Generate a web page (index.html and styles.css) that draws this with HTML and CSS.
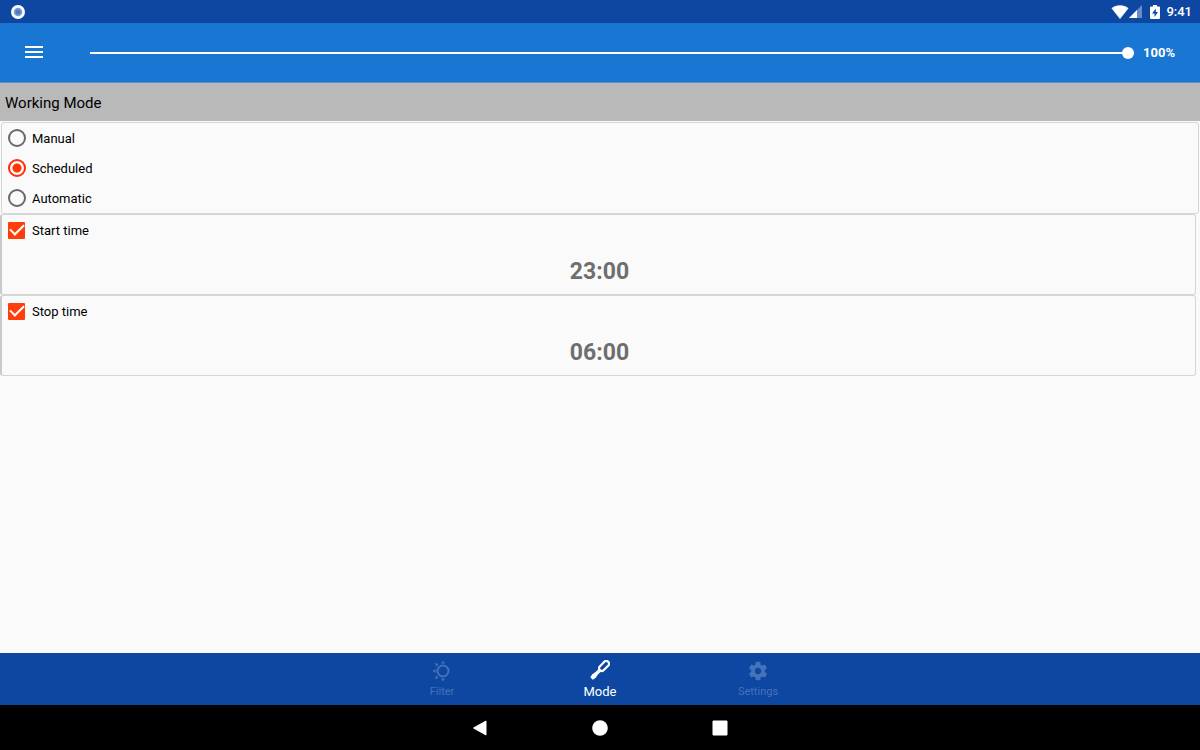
FILE: index.html
```html
<!DOCTYPE html>
<html lang="en">
<head>
    <meta charset="UTF-8">
    <meta name="viewport" content="width=device-width, initial-scale=1.0">
    <title>Working Mode</title>
    <link rel="stylesheet" href="styles.css">
</head>
<body>
    <!-- Status bar -->
    <div class="status-bar">
        <svg class="status-dot" width="14" height="14" viewBox="0 0 14 14" aria-hidden="true">
            <circle cx="7" cy="7" r="7" fill="#fff"/>
            <circle cx="7" cy="7" r="4.300" fill="#7a9bd3"/>
            <circle cx="7" cy="7" r="2.500" fill="#4f7ac2"/>
        </svg>
        <div class="status-icons">
            <svg width="18" height="14" viewBox="0 0 18 14" aria-hidden="true">
                <path d="M9 14 0.5 3.3C5 -0.7 13 -0.7 17.500 3.300Z" fill="#fff"/>
            </svg>
            <svg class="signal" width="13" height="13" viewBox="0 0 13 13" aria-hidden="true">
                <path d="M0 13 13 0V13Z" fill="#6a8bc8"/>
                <path d="M0 13 8 5V13Z" fill="#fff"/>
            </svg>
            <svg class="battery" width="10" height="14" viewBox="0 0 10 14" aria-hidden="true">
                <path d="M3 0H7V1.500H9Q10 1.500 10 2.500V13Q10 14 9 14H1Q0 14 0 13V2.500Q0 1.500 1 1.500H3Z" fill="#fff"/>
                <path d="M5.800 3.500 2 8.500H4.500V12L8 7H5.800Z" fill="#0d47a1"/>
            </svg>
            <span class="clock">9:41</span>
        </div>
    </div>

    <!-- App bar with the intensity slider -->
    <header class="app-bar">
        <button class="menu-btn" type="button" aria-label="Menu">
            <svg width="18" height="14" viewBox="0 0 18 14">
                <path d="M0 1H18M0 6H18M0 11H18" stroke="#fff" stroke-width="2"/>
            </svg>
        </button>
        <input class="slider" id="level" type="range" min="0" max="100" value="100" aria-label="Level">
        <output class="level" for="level">100%</output>
    </header>

    <main class="content">
        <h1 class="section-title">Working Mode</h1>

        <div class="card modes" role="radiogroup" aria-label="Working Mode">
            <label class="option"><input type="radio" name="mode" value="manual">Manual</label>
            <label class="option"><input type="radio" name="mode" value="scheduled" checked>Scheduled</label>
            <label class="option"><input type="radio" name="mode" value="automatic">Automatic</label>
        </div>

        <div class="card timer">
            <label class="option"><input type="checkbox" name="start" checked>Start time</label>
            <button class="time" type="button">23:00</button>
        </div>

        <div class="card timer">
            <label class="option"><input type="checkbox" name="stop" checked>Stop time</label>
            <button class="time" type="button">06:00</button>
        </div>
    </main>

    <!-- Bottom tabs -->
    <nav class="tabs">
        <a class="tab" href="#filter">
            <svg width="20" height="22" viewBox="0 0 20 22" fill="currentColor">
                <circle cx="11" cy="11" r="5.500" fill="none" stroke="currentColor" stroke-width="2"/>
                <path d="M11 0.500 13 3.500H9ZM11 21.500 9 18.500H13ZM0.500 11 3.500 9V13ZM3 3 6.800 4 4 6.800ZM3 19 4 15.200 6.800 18Z"/>
            </svg>
            <span>Filter</span>
        </a>
        <a class="tab active" href="#mode">
            <svg width="20" height="20" viewBox="0 0 20 20" fill="none" stroke="currentColor">
                <g transform="rotate(45 10 10)">
                    <rect x="7.300" y="-1.500" width="5.400" height="11.500" rx="2.300" stroke-width="2.200"/>
                    <path d="M10 10V16" stroke-width="3.400"/>
                    <path d="M8.300 15H11.700L12.500 18.500 11.700 22H8.300L7.500 18.500Z" fill="currentColor" stroke="none"/>
                </g>
            </svg>
            <span>Mode</span>
        </a>
        <a class="tab" href="#settings">
            <svg width="22" height="22" viewBox="0 0 24 24" fill="currentColor">
                <path d="M19.430 12.980c.04-.32.07-.64.07-.98s-.03-.66-.07-.98l2.110-1.650c.19-.15.24-.42.12-.64l-2-3.460c-.12-.22-.39-.3-.61-.22l-2.490 1c-.52-.4-1.080-.73-1.690-.98l-.38-2.650C14.460 2.180 14.250 2 14 2h-4c-.25 0-.46.18-.49.42l-.38 2.650c-.61.25-1.170.59-1.690.98l-2.490-1c-.23-.09-.49 0-.61.22l-2 3.460c-.13.22-.07.49.12.64l2.110 1.650c-.04.32-.07.65-.07.98s.03.66.07.98l-2.110 1.650c-.19.15-.24.42-.12.64l2 3.460c.12.22.39.3.61.22l2.490-1c.52.4 1.080.73 1.690.98l.38 2.650c.03.24.24.42.49.42h4c.25 0 .46-.18.49-.42l.38-2.650c.61-.25 1.170-.59 1.690-.98l2.490 1c.23.09.49 0 .61-.22l2-3.460c.12-.22.07-.49-.12-.64l-2.110-1.650zM12 15.500c-1.930 0-3.500-1.570-3.500-3.500s1.570-3.500 3.500-3.500 3.500 1.570 3.500 3.500-1.570 3.500-3.500 3.500z"/>
            </svg>
            <span>Settings</span>
        </a>
    </nav>

    <!-- System navigation -->
    <div class="system-nav">
        <button type="button" aria-label="Back">
            <svg width="16" height="16" viewBox="0 0 16 16"><path d="M1.500 8 14 1V15Z" fill="#fff" stroke="#fff" stroke-linejoin="round"/></svg>
        </button>
        <button type="button" aria-label="Home">
            <svg width="16" height="16" viewBox="0 0 16 16"><circle cx="8" cy="8" r="7.800" fill="#fff"/></svg>
        </button>
        <button type="button" aria-label="Recent apps">
            <svg width="16" height="16" viewBox="0 0 16 16"><rect x="0.500" y="0.500" width="15" height="15" rx="1" fill="#fff"/></svg>
        </button>
    </div>

    <script>
        // Keep the percentage in step with the slider
        const slider = document.getElementById('level');
        slider.addEventListener('input', () => {
            document.querySelector('.level').textContent = slider.value + '%';
        });
    </script>
</body>
</html>
```
FILE: styles.css
```css
/* Global Styles */
* {
    box-sizing: border-box;
}

body {
    font-family: Roboto, 'Liberation Sans', sans-serif;
    margin: 0;
    background-color: #fafafa;
    color: #000;
    display: flex;
    flex-direction: column;
    min-height: 100vh;
}

button {
    font-family: inherit;
    background: none;
    border: none;
    padding: 0;
    cursor: pointer;
}

svg {
    display: block;
}

/* Status bar */
.status-bar {
    display: flex;
    align-items: center;
    justify-content: space-between;
    height: 23px;
    padding: 0 8px 0 11px;
    background-color: #0d47a1;
    color: #fff;
}

.status-icons {
    display: flex;
    align-items: center;
}

.battery {
    margin: 0 6px 0 8px;
}

.clock {
    font-size: 13px;
    font-weight: 500;
    line-height: 23px;
}

/* App bar */
.app-bar {
    display: flex;
    align-items: center;
    height: 60px;
    padding: 0 25px;
    background-color: #1976d2;
    border-bottom: 1px solid #5f8fc4;
    color: #fff;
}

.menu-btn {
    margin-right: 47px;
}

.slider {
    flex: 1;
    min-width: 0;
    height: 20px;
    margin: 0 9px 0 0;
    appearance: none;
    background: linear-gradient(#fff, #fff) center / 100% 2px no-repeat;
    cursor: pointer;
}

.slider::-webkit-slider-thumb {
    appearance: none;
    width: 12px;
    height: 12px;
    border-radius: 50%;
    background-color: #fff;
}

.level {
    font-size: 13px;
    font-weight: 700;
}

/* Content */
.content {
    flex: 1;
}

.section-title {
    margin: 0 0 1px;
    padding: 2px 5px 0;
    background-color: #b9b9b9;
    font-size: 15px;
    font-weight: 400;
    line-height: 36px;
}

.card {
    border: 1px solid #d6d6d6;
    border-radius: 3px;
}

.modes {
    margin: 0 1px;
}

.timer {
    margin-right: 4px;
    border-left: 2px solid #cacaca;
}

.option {
    display: flex;
    align-items: center;
    height: 30px;
    padding-left: 6px;
    font-size: 13px;
}

.option input {
    appearance: none;
    width: 18px;
    height: 18px;
    margin: 0 6px 0 0;
}

.option input[type="radio"] {
    border: 2px solid #696969;
    border-radius: 50%;
}

.option input[type="radio"]:checked {
    border-color: #ff2a10;
    background: radial-gradient(circle, #ff3500 4px, transparent 5px);
}

.option input[type="checkbox"] {
    display: grid;
    place-items: center;
    width: 17px;
    height: 17px;
    margin-right: 7px;
    border-radius: 1px;
    background-color: #ff3d0a;
}

.option input[type="checkbox"]::before {
    content: "";
    width: 12px;
    height: 6px;
    margin-bottom: 5px;
    border: solid #fff;
    border-width: 0 0 2px 2px;
    transform: rotate(-45deg);
}

.option input[type="checkbox"]:not(:checked) {
    border: 2px solid #696969;
    background: none;
}

.option input[type="checkbox"]:not(:checked)::before {
    content: none;
}

.time {
    display: block;
    width: 100%;
    padding: 5px 0 0 2px;
    color: #6e6e6e;
    font-size: 23px;
    font-weight: 700;
    line-height: 44px;
}

/* Bottom tabs */
.tabs {
    display: flex;
    justify-content: center;
    height: 52px;
    background-color: #0d47a1;
}

.tab {
    display: flex;
    flex-direction: column;
    align-items: center;
    justify-content: space-between;
    width: 158px;
    padding: 7px 0 6px;
    color: #4672b9;
    font-size: 11px;
    line-height: 14px;
    text-decoration: none;
}

.tab.active {
    color: #fff;
    font-size: 13px;
}

/* System navigation */
.system-nav {
    display: flex;
    align-items: center;
    justify-content: center;
    gap: 104px;
    height: 45px;
    background-color: #000;
}
```
